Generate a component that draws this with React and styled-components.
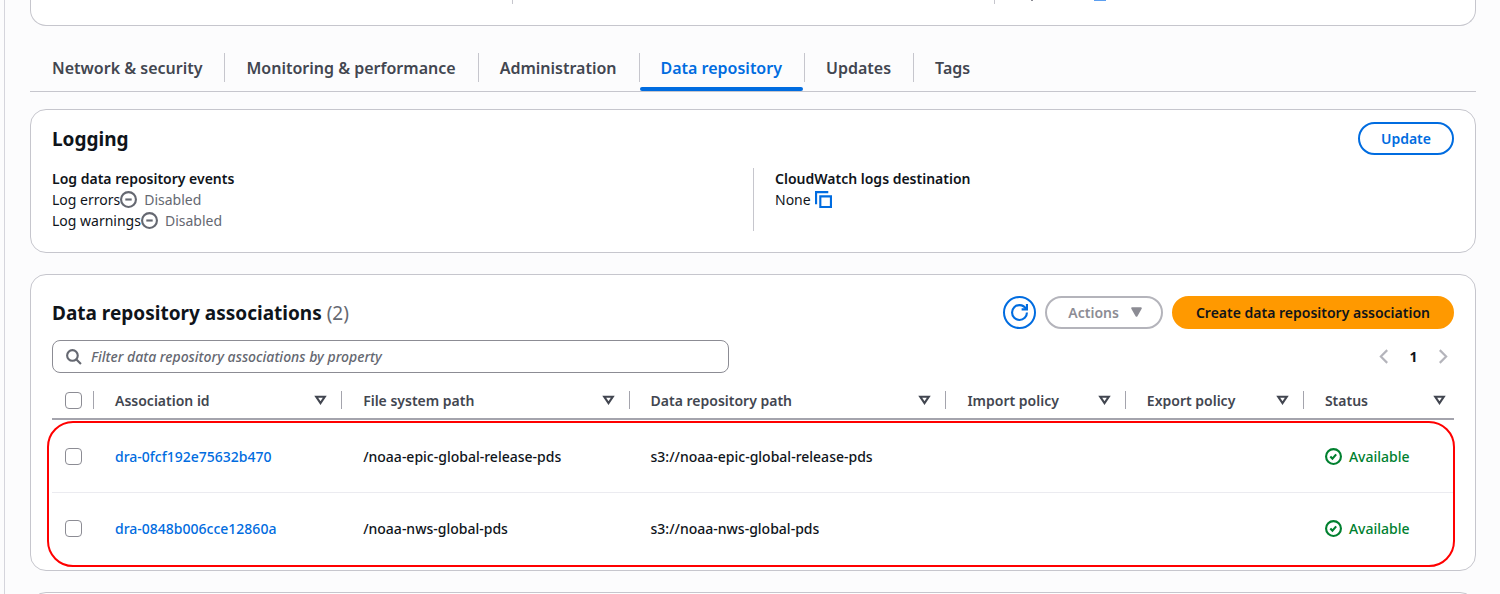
import React, { useState } from 'react';
import styled, { createGlobalStyle } from 'styled-components';

const GlobalStyle = createGlobalStyle`
  *, *::before, *::after {
    box-sizing: border-box;
  }

  html {
    scrollbar-width: none;
  }

  body {
    margin: 0;
    background: #fcfcfd;
    color: #0f141a;
    font-family: 'Noto Sans', 'Open Sans', sans-serif;
    font-size: 14px;
    line-height: 21px;
  }
`;

const Page = styled.div`
  min-height: 100vh;
  margin-left: 4px;
  padding: 0 24px 0 25px;
  border-left: 1px solid #d5d5dc;
`;

const Card = styled.section`
  background: #fff;
  border: 1px solid #c6c6cd;
  border-radius: 16px;
  padding: 12px 21px 21px;
`;

const SummaryCard = styled(Card)`
  border-top: none;
  border-radius: 0 0 16px 16px;
  padding-top: 0;
`;

const AssociationsCard = styled(Card)`
  margin-top: 21px;
  padding: 21px 21px 6px;
`;

const NextCard = styled(Card)`
  margin-top: 21px;
`;

const Columns = styled.div`
  display: grid;
  grid-template-columns: repeat(${(props) => props.$count}, 1fr);
  column-gap: 44px;
`;

const Column = styled.div`
  & + & {
    margin-left: -22px;
    padding-left: 21px;
    border-left: 1px solid #c6c6cd;
  }
`;

const SummaryColumn = styled(Column)`
  display: flex;
  gap: 61px;
  height: 4px;
`;

const Descender = styled.span`
  width: 2px;
  height: 1px;
  margin-left: 15px;
  background: #8c8c94;
`;

const LinkEdge = styled.span`
  width: 12px;
  height: 1px;
  background: #5c9ff0;
`;

const TabList = styled.nav`
  display: flex;
  margin-top: 18px;
  border-bottom: 1px solid #c6c6cd;
`;

const Tab = styled.button`
  display: flex;
  flex-direction: column;
  align-items: stretch;
  padding: 9px 0 0;
  border: none;
  background: none;
  color: ${(props) => (props.$active ? '#006ce0' : '#424650')};
  font: inherit;
  font-size: 16px;
  font-weight: 600;
  cursor: pointer;

  &::after {
    content: '';
    height: 4px;
    margin: 5px 1px 0;
    border-radius: 2px;
    background: ${(props) => (props.$active ? '#006ce0' : 'transparent')};
  }
`;

const TabText = styled.span`
  padding: 2px 22px 0;
  line-height: 27px;

  ${Tab} + ${Tab} & {
    padding-left: 21px;
    border-left: 1px solid #c6c6cd;
  }
`;

const LoggingCard = styled(Card)`
  margin-top: 17px;
`;

const CardHeader = styled.header`
  display: flex;
  align-items: center;
  justify-content: space-between;
`;

const Heading = styled.h2`
  margin: 0;
  font-size: 19px;
  font-weight: 700;
  line-height: 24px;
`;

const Count = styled.span`
  color: #656871;
  font-weight: 400;
`;

const ButtonGroup = styled.div`
  display: flex;
  gap: 9px;
`;

const Button = styled.button`
  display: flex;
  align-items: center;
  gap: 9px;
  height: 33px;
  padding: 0 21px;
  border: 2px solid #006ce0;
  border-radius: 17px;
  background: #fff;
  color: #006ce0;
  font: inherit;
  font-weight: 600;
  cursor: pointer;

  &:disabled {
    border-color: #b4b4bb;
    color: #8c8c94;
    cursor: default;
  }
`;

const PrimaryButton = styled(Button)`
  padding: 0 22px;
  border-color: #ff9900;
  background: #ff9900;
  color: #0f141a;
`;

const MenuButton = styled(Button)`
  padding: 0 16px 0 21px;
`;

const IconButton = styled(Button)`
  justify-content: center;
  width: 33px;
  padding: 0;
`;

const LoggingColumns = styled(Columns)`
  margin-top: 13px;
`;

const FieldLabel = styled.div`
  font-weight: 600;
`;

const FieldRow = styled.div`
  display: flex;
  align-items: center;
`;

const Status = styled.span`
  display: flex;
  align-items: center;
  gap: 7px;
  color: ${(props) => (props.$positive ? '#00802f' : '#656871')};
`;

const CopyButton = styled.button`
  display: flex;
  margin-left: 4px;
  padding: 0;
  border: none;
  background: none;
  color: #006ce0;
  cursor: pointer;
`;

const Toolbar = styled.div`
  display: flex;
  align-items: center;
  justify-content: space-between;
  margin-top: 11px;
`;

const Filter = styled.label`
  display: flex;
  align-items: center;
  gap: 9px;
  flex: 0 1 677px;
  height: 33px;
  padding: 0 12px;
  border: 1px solid #8c8c94;
  border-radius: 8px;
  color: #656871;
`;

const FilterInput = styled.input`
  flex: 1;
  padding: 0;
  border: none;
  outline: none;
  background: none;
  color: #0f141a;
  font: inherit;

  &::placeholder {
    color: #656871;
    font-weight: 500;
    font-style: italic;
    opacity: 1;
  }
`;

const Pagination = styled.nav`
  display: flex;
  align-items: center;
  gap: 9px;
`;

const PageButton = styled.button`
  display: flex;
  align-items: center;
  justify-content: center;
  width: 21px;
  height: 21px;
  padding: 0;
  border: none;
  background: none;
  color: #0f141a;
  font: inherit;
  font-weight: 700;

  &:disabled {
    color: #b4b4bb;
  }
`;

const TableWrap = styled.div`
  position: relative;
  margin-top: 9px;
`;

const Table = styled.table`
  width: 100%;
  table-layout: fixed;
  border-collapse: separate;
  border-spacing: 0;
`;

const HeadCell = styled.th`
  width: ${(props) => props.$width || 'auto'};
  height: 38px;
  padding: 0;
  border-bottom: 2px solid #a4a4ad;
  color: #424650;
  font-weight: 600;
  text-align: left;
`;

const HeadContent = styled.div`
  display: flex;
  align-items: center;
  justify-content: space-between;
  height: 18px;
  padding: 0 ${(props) => (props.$last ? 6 : 12)}px 0 21px;
  border-right: ${(props) => (props.$last ? 'none' : '1px solid #a4a4ad')};
`;

const CheckHead = styled(HeadContent)`
  padding: 0 11px 0 13px;
`;

const Cell = styled.td`
  height: 72px;
  padding: 0 21px;
  font-weight: 500;
  white-space: nowrap;

  tr + tr > & {
    border-top: 1px solid #ebebf0;
  }
`;

const CheckCell = styled(Cell)`
  padding: 0 13px;
`;

const Checkbox = styled.input`
  display: block;
  appearance: none;
  flex: none;
  width: 17px;
  height: 17px;
  margin: 0;
  border: 1px solid #8c8c94;
  border-radius: 4px;
  background: #fff;

  &:checked {
    border-color: #006ce0;
    background: #006ce0;
  }
`;

const Link = styled.a`
  color: #006ce0;
  text-decoration: none;
`;

// Red frame that calls out the association rows
const Highlight = styled.div`
  position: absolute;
  inset: 39px -1px -3px -5px;
  border: 2px solid #ff0000;
  border-radius: 26px;
  pointer-events: none;
`;

const Svg = styled.svg`
  flex: none;
  display: block;
  fill: none;
  stroke: currentColor;
  stroke-width: 2;
`;

const Icon = ({ size = 17, children }) => (
  <Svg width={size} height={size} viewBox="0 0 16 16" aria-hidden="true">
    {children}
  </Svg>
);

const StoppedIcon = () => (
  <Icon>
    <circle cx="8" cy="8" r="7" />
    <path d="M11 8H5" />
  </Icon>
);

const SuccessIcon = () => (
  <Icon>
    <circle cx="8" cy="8" r="7" />
    <path d="M5 8l2 2 3.5-4" />
  </Icon>
);

const CopyIcon = () => (
  <Icon>
    <path d="M15 5H5v10h10V5Z" />
    <path d="M12.5 1H1v11.5" />
  </Icon>
);

const RefreshIcon = () => (
  <Icon>
    <path d="M15 8c0 3.87-3.13 7-7 7s-7-3.13-7-7 3.13-7 7-7c2.79 0 5.2 1.63 6.33 4" />
    <path d="M10 5h5V0" />
  </Icon>
);

const SearchIcon = () => (
  <Icon>
    <circle cx="7" cy="7" r="5" />
    <path d="m15 15-4.5-4.5" />
  </Icon>
);

const SortIcon = () => (
  <Icon>
    <path d="M4 4.5h8L8 10.5z" />
  </Icon>
);

const CaretIcon = () => (
  <Icon>
    <path d="M4 4h8l-4 7z" fill="currentColor" strokeLinejoin="round" />
  </Icon>
);

const AngleIcon = ({ right }) => (
  <Icon>
    <path d={right ? 'm4.5 2 6 6-6 6' : 'm11.5 2-6 6 6 6'} />
  </Icon>
);

const tabs = [
  'Network & security',
  'Monitoring & performance',
  'Administration',
  'Data repository',
  'Updates',
  'Tags',
];

const columns = [
  { label: 'Association id', width: '17.7%' },
  { label: 'File system path', width: '20.5%' },
  { label: 'Data repository path', width: '22.6%' },
  { label: 'Import policy', width: '12.8%' },
  { label: 'Export policy', width: '12.7%' },
  { label: 'Status' },
];

const associations = [
  {
    id: 'dra-0fcf192e75632b470',
    fileSystemPath: '/noaa-epic-global-release-pds',
    repositoryPath: 's3://noaa-epic-global-release-pds',
    status: 'Available',
  },
  {
    id: 'dra-0848b006cce12860a',
    fileSystemPath: '/noaa-nws-global-pds',
    repositoryPath: 's3://noaa-nws-global-pds',
    status: 'Available',
  },
];

function App() {
  const [activeTab, setActiveTab] = useState('Data repository');
  const [filter, setFilter] = useState('');
  const [selected, setSelected] = useState([]);

  const toggle = (id) => {
    setSelected(selected.includes(id) ? selected.filter((s) => s !== id) : [...selected, id]);
  };

  const toggleAll = () => {
    setSelected(selected.length === associations.length ? [] : associations.map((a) => a.id));
  };

  const rows = associations.filter((a) => Object.values(a).join(' ').includes(filter));

  return (
    <>
      <GlobalStyle />
      <Page>
        <SummaryCard>
          <Columns $count={3}>
            <SummaryColumn />
            <SummaryColumn />
            <SummaryColumn>
              <Descender />
              <LinkEdge />
            </SummaryColumn>
          </Columns>
        </SummaryCard>

        <TabList>
          {tabs.map((tab) => (
            <Tab key={tab} type="button" $active={tab === activeTab} onClick={() => setActiveTab(tab)}>
              <TabText>{tab}</TabText>
            </Tab>
          ))}
        </TabList>

        <LoggingCard>
          <CardHeader>
            <Heading>Logging</Heading>
            <Button type="button">Update</Button>
          </CardHeader>
          <LoggingColumns $count={2}>
            <Column>
              <FieldLabel>Log data repository events</FieldLabel>
              <FieldRow>
                Log errors
                <Status><StoppedIcon />Disabled</Status>
              </FieldRow>
              <FieldRow>
                Log warnings
                <Status><StoppedIcon />Disabled</Status>
              </FieldRow>
            </Column>
            <Column>
              <FieldLabel>CloudWatch logs destination</FieldLabel>
              <FieldRow>
                None
                <CopyButton type="button" aria-label="Copy"><CopyIcon /></CopyButton>
              </FieldRow>
            </Column>
          </LoggingColumns>
        </LoggingCard>

        <AssociationsCard>
          <CardHeader>
            <Heading>
              Data repository associations <Count>({associations.length})</Count>
            </Heading>
            <ButtonGroup>
              <IconButton type="button" aria-label="Refresh"><RefreshIcon /></IconButton>
              <MenuButton type="button" disabled={selected.length === 0}>
                Actions
                <CaretIcon />
              </MenuButton>
              <PrimaryButton type="button">Create data repository association</PrimaryButton>
            </ButtonGroup>
          </CardHeader>

          <Toolbar>
            <Filter>
              <SearchIcon />
              <FilterInput
                type="text"
                aria-label="Filter data repository associations by property"
                placeholder="Filter data repository associations by property"
                value={filter}
                onChange={(e) => setFilter(e.target.value)}
              />
            </Filter>
            <Pagination aria-label="Pages">
              <PageButton type="button" aria-label="Previous page" disabled><AngleIcon /></PageButton>
              <PageButton type="button">1</PageButton>
              <PageButton type="button" aria-label="Next page" disabled><AngleIcon right /></PageButton>
            </Pagination>
          </Toolbar>

          <TableWrap>
            <Table>
              <thead>
                <tr>
                  <HeadCell $width="42px">
                    <CheckHead>
                      <Checkbox
                        type="checkbox"
                        aria-label="Select all associations"
                        checked={selected.length === associations.length}
                        onChange={toggleAll}
                      />
                    </CheckHead>
                  </HeadCell>
                  {columns.map((column, i) => (
                    <HeadCell key={column.label} $width={column.width}>
                      <HeadContent $last={i === columns.length - 1}>
                        {column.label}
                        <SortIcon />
                      </HeadContent>
                    </HeadCell>
                  ))}
                </tr>
              </thead>
              <tbody>
                {rows.map((row) => (
                  <tr key={row.id}>
                    <CheckCell>
                      <Checkbox
                        type="checkbox"
                        aria-label={`Select ${row.id}`}
                        checked={selected.includes(row.id)}
                        onChange={() => toggle(row.id)}
                      />
                    </CheckCell>
                    <Cell><Link href={`#${row.id}`}>{row.id}</Link></Cell>
                    <Cell>{row.fileSystemPath}</Cell>
                    <Cell>{row.repositoryPath}</Cell>
                    <Cell />
                    <Cell />
                    <Cell>
                      <Status $positive><SuccessIcon />{row.status}</Status>
                    </Cell>
                  </tr>
                ))}
              </tbody>
            </Table>
            <Highlight />
          </TableWrap>
        </AssociationsCard>

        <NextCard />
      </Page>
    </>
  );
}

export default App;
